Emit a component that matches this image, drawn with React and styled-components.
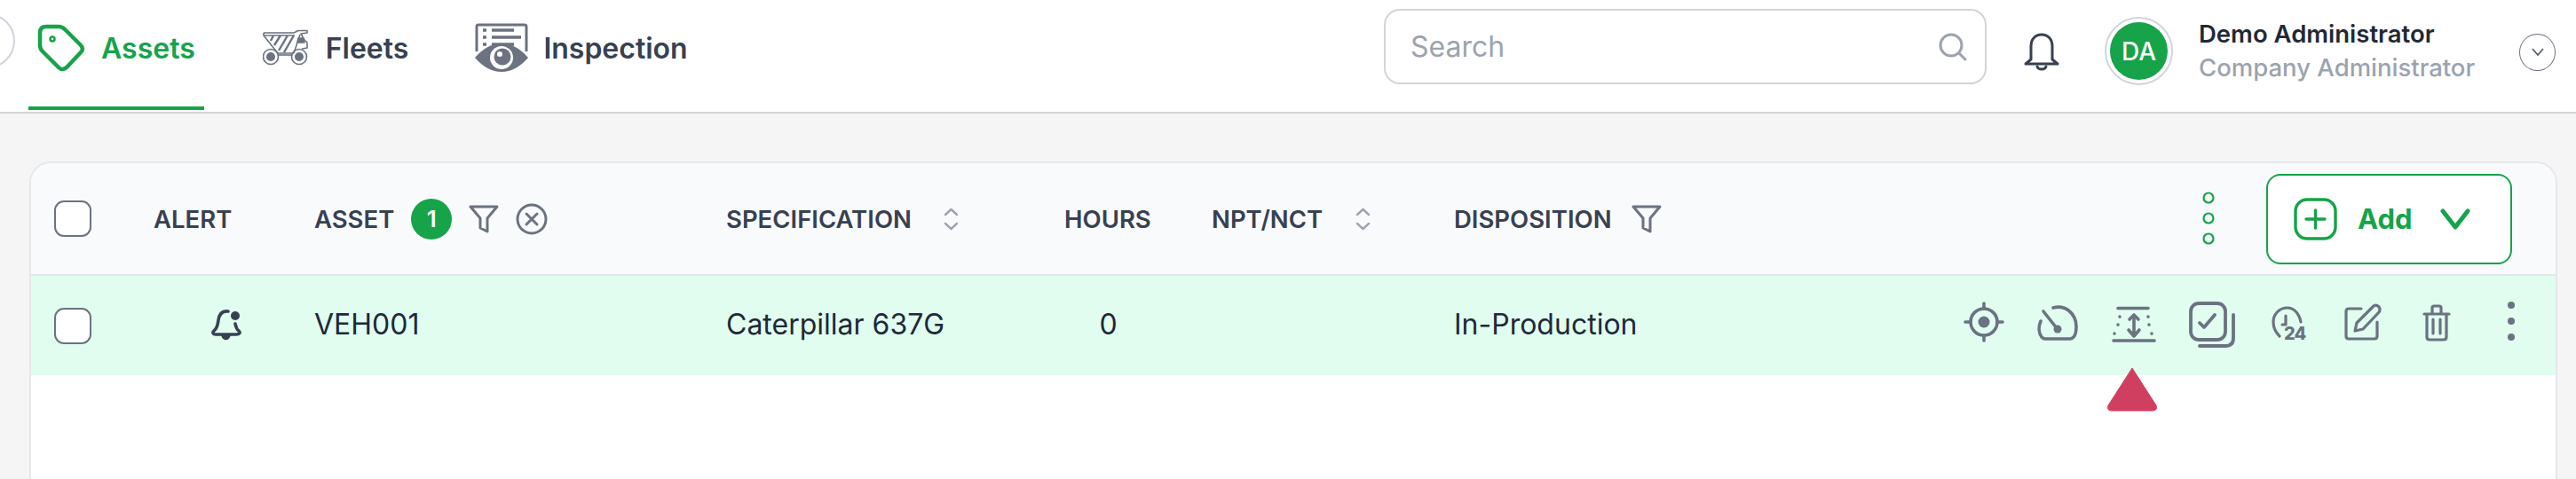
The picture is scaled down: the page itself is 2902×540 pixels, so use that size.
import React from 'react';
import styled, { createGlobalStyle } from 'styled-components';

const GREEN = '#16a34a';
const GRAY = '#6b7280';

const GlobalStyle = createGlobalStyle`
  html, body {
    margin: 0;
    height: 100%;
    background: #f5f5f5;
    font-family: Inter, "Liberation Sans", sans-serif;
    overflow: hidden;
  }
  * { box-sizing: border-box; }
`;

const Page = styled.div`
  height: 540px;
  display: flex;
  flex-direction: column;
`;

const TopBar = styled.header`
  height: 128px;
  flex: none;
  display: flex;
  background: #fff;
  border-bottom: 2px solid #d1d5db;
  padding-right: 23px;
`;

const CollapseButton = styled.button`
  width: 62px;
  height: 62px;
  margin: 15px 0 0 -45px;
  flex: none;
  border: 2px solid #d1d5db;
  border-radius: 50%;
  background: #fff;
  padding: 0;
`;

const Tabs = styled.nav`
  display: flex;
  margin-left: 15px;
`;

const Tab = styled.a`
  height: 124px;
  margin-left: ${p => p.$ml || 0}px;
  padding: 0 10px 12px;
  display: flex;
  align-items: center;
  gap: ${p => p.$gap}px;
  font-size: 32px;
  font-weight: 600;
  color: ${p => (p.$active ? GREEN : '#374151')};
  border-bottom: 4px solid ${p => (p.$active ? GREEN : 'transparent')};
`;

const RightSide = styled.div`
  margin-left: auto;
  display: flex;
  align-items: center;
  padding-bottom: 16px;
`;

const SearchBox = styled.div`
  width: 679px;
  height: 85px;
  margin: 0 42px 5px 0;
  padding: 0 20px 0 28px;
  display: flex;
  align-items: center;
  justify-content: space-between;
  border: 2px solid #d1d5db;
  border-radius: 18px;
  background: #fff;
  font-size: 32px;
  color: #9ca3af;
`;

const BellWrap = styled.div`
  display: flex;
  margin: 7px 51px 0 0;
`;

const Avatar = styled.div`
  width: 77px;
  height: 77px;
  margin: 5px 29px 0 0;
  flex: none;
  display: flex;
  align-items: center;
  justify-content: center;
  border-radius: 50%;
  border: 2px solid #d1d5db;
  background: #fff;
`;

const AvatarInner = styled.div`
  width: 65px;
  height: 65px;
  border-radius: 50%;
  background: ${GREEN};
  display: flex;
  align-items: center;
  justify-content: center;
  color: #fff;
  font-size: 28px;
  font-weight: 500;
`;

const UserInfo = styled.div`
  width: 311px;
  display: flex;
  flex-direction: column;
  gap: 4px;
  margin: 5px 50px 0 0;
`;

const UserName = styled.div`
  font-size: 27.5px;
  line-height: 32px;
  font-weight: 600;
  color: #1f2937;
  white-space: nowrap;
`;

const UserRole = styled.div`
  font-size: 27.5px;
  line-height: 36px;
  font-weight: 500;
  color: #9ca3af;
  white-space: nowrap;
`;

const ChevronCircle = styled.div`
  width: 41px;
  height: 42px;
  margin-top: 7px;
  display: flex;
  align-items: center;
  justify-content: center;
  border: 1px solid ${GRAY};
  border-radius: 50%;
`;

const Content = styled.main`
  flex: 1;
  padding: 54px 21px 0 33px;
  display: flex;
  min-height: 0;
`;

const Card = styled.section`
  flex: 1;
  background: #fff;
  border: 2px solid #e5e7eb;
  border-bottom: none;
  border-radius: 24px 24px 0 0;
  overflow: hidden;
`;

const columns = '112px 181px 464px 381px 166px 273px 1fr';

const HeadRow = styled.div`
  height: 127px;
  padding-left: 26px;
  display: grid;
  grid-template-columns: ${columns};
  align-items: center;
  background: #f9fafb;
  border-bottom: 2px solid #e5e7eb;
`;

const BodyRow = styled.div`
  height: 112px;
  padding-left: 26px;
  display: grid;
  grid-template-columns: ${columns};
  align-items: center;
  background: #e0fdf0;
  color: #1f2937;
  font-size: 32px;
`;

const Checkbox = styled.span`
  display: block;
  width: 42px;
  height: 41px;
  background: #fff;
  border: 2px solid ${GRAY};
  border-radius: 11px;
`;

const HeadCell = styled.div`
  display: flex;
  align-items: center;
  gap: ${p => p.$gap || 0}px;
  font-size: 27.5px;
  font-weight: 600;
  color: #374151;
  white-space: nowrap;
`;

const DispositionHead = styled(HeadCell)`
  margin-right: auto;
`;

const Badge = styled.span`
  width: 46px;
  height: 46px;
  border-radius: 50%;
  background: ${GREEN};
  color: #fff;
  display: flex;
  align-items: center;
  justify-content: center;
  font-size: 26px;
  font-weight: 600;
`;

const TextCell = styled.div`
  margin-bottom: 4px;
`;

const HoursCell = styled(TextCell)`
  width: 98px;
  padding-left: 1px;
  text-align: center;
`;

const AlertCell = styled.div`
  display: flex;
  padding-left: 65px;
`;

const HeadTools = styled.div`
  display: flex;
  align-items: center;
  justify-content: flex-end;
  gap: 58px;
  padding-right: 49px;
`;

const DispositionRow = styled.div`
  display: flex;
  align-items: center;
  justify-content: space-between;
`;

const AddButton = styled.button`
  width: 277px;
  height: 102px;
  padding: 0 0 0 29px;
  display: flex;
  align-items: center;
  background: #fff;
  border: 2px solid ${GREEN};
  border-radius: 16px;
  color: ${GREEN};
  font-family: inherit;
  font-size: 31px;
  font-weight: 700;
`;

const AddLabel = styled.span`
  margin: 0 31px 0 23px;
`;

const Actions = styled.div`
  position: relative;
  display: flex;
  justify-content: flex-end;
  padding-right: 8px;
  margin-bottom: 2px;
`;

const ActionSlot = styled.div`
  width: ${p => p.$w}px;
  padding-top: ${p => p.$top}px;
  display: flex;
  justify-content: center;
  align-items: flex-start;
`;

const Marker = styled.svg`
  position: absolute;
  left: 179px;
  top: 73px;
`;

const TagIcon = () => (
  <svg width="54" height="54" viewBox="0 0 54 54" fill="none" stroke={GREEN} strokeWidth="4.5" strokeLinejoin="round">
    <path d="M3 10Q3 3 10 3H24Q28 3 31 6L49 24Q53 28 49 32L33 49Q28 53 24 49L6 31Q3 28 3 24Z" />
    <circle cx="17" cy="17" r="2.5" strokeWidth="2.5" />
  </svg>
);

const TruckIcon = () => (
  <svg width="52" height="42" viewBox="0 0 52 42" fill="none" stroke={GRAY} strokeWidth="1.6" strokeLinejoin="round">
    <path d="M1 4H35L40 1.5H50V4L43 5L47 12L50 15V21L44 22M1 4V7L17 27H35M35 27L42 6" />
    <path d="M1 7H36" />
    <path d="M12 7L9 13M20 7L13 18M28 7L18 24M35 7L24 26" strokeWidth="2.4" />
    <path d="M40 10H45L47 15H39Z" fill={GRAY} />
    <path d="M17 29H33" />
    <circle cx="9" cy="31" r="8.5" />
    <circle cx="9" cy="31" r="5" fill={GRAY} stroke="none" />
    <circle cx="41" cy="31" r="8.5" />
    <circle cx="41" cy="31" r="5" fill={GRAY} stroke="none" />
  </svg>
);

const InspectionIcon = () => (
  <svg width="60" height="56" viewBox="0 0 60 56" fill="none">
    <path d="M2 32V4Q2 2 4 2H56Q58 2 58 4V32" stroke={GRAY} strokeWidth="3" />
    <path d="M9 8H13M19 8H44M9 16H13M19 16H52M9 24H13M19 24H44" stroke={GRAY} strokeWidth="3.4" />
    <path d="M0 39Q14 23 30 23Q46 23 60 39Q46 55 30 55Q14 55 0 39Z" fill={GRAY} />
    <circle cx="30" cy="39" r="13" fill="#fff" />
    <circle cx="31" cy="38" r="9.5" fill={GRAY} />
    <circle cx="28" cy="35" r="3" fill="#fff" />
  </svg>
);

const SearchIcon = () => (
  <svg width="32" height="32" viewBox="0 0 32 32" fill="none" stroke="#9ca3af" strokeWidth="3" strokeLinecap="round">
    <circle cx="14" cy="14" r="12" />
    <path d="M23 23L30 30" />
  </svg>
);

const BellIcon = () => (
  <svg width="40" height="44" viewBox="0 0 40 44" fill="none" stroke="#374151" strokeWidth="3" strokeLinecap="round" strokeLinejoin="round">
    <path d="M8 30V15C8 7 13 2 20 2C27 2 32 7 32 15V30L38 35H2L8 30Z" />
    <path d="M15 38C16 42 24 42 25 38" />
  </svg>
);

const SmallChevron = () => (
  <svg width="16" height="10" viewBox="0 0 16 10" fill="none" stroke="#4b5563" strokeWidth="1.6">
    <path d="M2 1L8 8L14 1" />
  </svg>
);

const SortIcon = () => (
  <svg width="19" height="26" viewBox="0 0 19 26" fill="none" stroke="#9ca3af" strokeWidth="2.4" strokeLinecap="round" strokeLinejoin="round">
    <path d="M3 8L9.5 2L16 8M3 18L9.5 24L16 18" />
  </svg>
);

const FunnelIcon = () => (
  <svg width="34" height="32" viewBox="0 0 34 32" fill="none" stroke={GRAY} strokeWidth="3" strokeLinejoin="round">
    <path d="M2 2H32L21 15V30L13 26V15Z" />
  </svg>
);

const ClearIcon = () => (
  <svg width="36" height="36" viewBox="0 0 36 36" fill="none" stroke={GRAY} strokeWidth="3" strokeLinecap="round">
    <circle cx="18" cy="18" r="16" />
    <path d="M12 12L24 24M24 12L12 24" />
  </svg>
);

const AlertBell = () => (
  <svg width="34" height="36" viewBox="0 0 34 36" fill="none" stroke="#374151" strokeWidth="3.6" strokeLinecap="round">
    <path d="M19 2C12 1 9 5 8 12C7 19 6 21 3 24C1 26 2 28 5 28H28C32 28 33 26 31 24C28 22 28 20 27 16" />
    <circle cx="27" cy="7" r="5" fill="#374151" stroke="none" />
    <path d="M11 29C13 36 20 36 22 29" fill="#374151" stroke="none" />
  </svg>
);

const VerticalDots = () => (
  <svg width="14" height="62" viewBox="0 0 14 62" fill="none" stroke={GREEN} strokeWidth="2.2">
    <circle cx="7" cy="7" r="5.5" />
    <circle cx="7" cy="30" r="5.5" />
    <circle cx="7" cy="53" r="5.5" />
  </svg>
);

const PlusBox = () => (
  <svg width="49" height="48" viewBox="0 0 49 48" fill="none" stroke={GREEN} strokeWidth="3.4" strokeLinecap="round">
    <rect x="2" y="2" width="45" height="44" rx="13" />
    <path d="M24.5 14V34M14 24H35" />
  </svg>
);

const AddChevron = () => (
  <svg width="34" height="26" viewBox="0 0 34 26" fill="none" stroke={GREEN} strokeWidth="5" strokeLinecap="round" strokeLinejoin="round">
    <path d="M3 4L17 22L31 4" />
  </svg>
);

const strokeProps = { fill: 'none', stroke: GRAY, strokeLinecap: 'round', strokeLinejoin: 'round' };

const TargetIcon = () => (
  <svg width="46" height="46" viewBox="0 0 46 46" {...strokeProps} strokeWidth="3.6">
    <circle cx="23" cy="23" r="15" />
    <circle cx="23" cy="23" r="6.5" fill={GRAY} stroke="none" />
    <path d="M23 2V8M23 38V44M2 23H8M38 23H44" />
  </svg>
);

const GaugeIcon = () => (
  <svg width="46" height="40" viewBox="0 0 46 40" {...strokeProps} strokeWidth="3.6">
    <path d="M18 3C32 -1 44 10 44 24C44 30 43 34 41 36C40 37 39 38 37 38H9C7 38 6 37 5 36C2 32 1 25 4 18" />
    <path d="M7 7L22 26" />
    <circle cx="23" cy="27" r="4.5" fill={GRAY} stroke="none" />
  </svg>
);

const HeightIcon = () => (
  <svg width="50" height="42" viewBox="0 0 50 42" {...strokeProps} strokeWidth="3.6">
    <path d="M7 2.5H41M2 39H48" />
    <path d="M25 11V33M20 15L25 10L30 15M19 27L25 34L31 27" />
    <path d="M9 12V12.1M41 12V12.1M7 21V21.1M42 21V21.1M3 31V31.1M45 31V31.1" strokeWidth="3.6" />
  </svg>
);

const CheckStackIcon = () => (
  <svg width="52" height="52" viewBox="0 0 52 52" {...strokeProps} strokeWidth="3.8">
    <rect x="2" y="2" width="39" height="41" rx="9" />
    <path d="M50 15V41Q50 50 41 50H12" />
    <path d="M12 24L17 29L29 15" />
  </svg>
);

const Clock24Icon = () => (
  <svg width="40" height="47" viewBox="0 0 40 47" {...strokeProps} strokeWidth="3.2">
    <path d="M33 18C31 8 25 2 18 2C8 2 2 10 2 18C2 24 4 29 9 34" />
    <path d="M16 11V21H12" />
    <text x="14" y="38" fontFamily="Inter, sans-serif" fontSize="20" fontWeight="800" fill={GRAY} stroke="none" letterSpacing="-1">24</text>
  </svg>
);

const EditIcon = () => (
  <svg width="42" height="42" viewBox="0 0 42 42" {...strokeProps} strokeWidth="3.2">
    <path d="M19 6H5Q2 6 2 9V37Q2 40 5 40H34Q37 40 37 37V21" />
    <path d="M12 31L14 22L33 3Q36 1 39 4Q41 7 39 10L21 29Z" />
  </svg>
);

const TrashIcon = () => (
  <svg width="32" height="42" viewBox="0 0 32 42" {...strokeProps} strokeWidth="3.2">
    <path d="M2 11H30M5 11V37Q5 40 8 40H24Q27 40 27 37V11M11 10V4Q11 2 13 2H19Q21 2 21 4V10M12 17V33M20 17V33" />
  </svg>
);

const KebabIcon = () => (
  <svg width="8" height="44" viewBox="0 0 8 44" fill={GRAY}>
    <circle cx="4" cy="4" r="4" />
    <circle cx="4" cy="22" r="4" />
    <circle cx="4" cy="40" r="4" />
  </svg>
);

const actionIcons = [
  [82, 0, TargetIcon],
  [84, 4, GaugeIcon],
  [88, 5, HeightIcon],
  [88, 0, CheckStackIcon],
  [85, 5, Clock24Icon],
  [82, 2, EditIcon],
  [84, 3, TrashIcon],
  [84, 0, KebabIcon],
];

function App() {
  return (
    <Page>
      <GlobalStyle />
      <TopBar>
        <CollapseButton aria-label="Collapse" />
        <Tabs>
          <Tab $active $gap={18}><TagIcon />Assets</Tab>
          <Tab $ml={56} $gap={19}><TruckIcon />Fleets</Tab>
          <Tab $ml={55} $gap={17}><InspectionIcon />Inspection</Tab>
        </Tabs>
        <RightSide>
          <SearchBox>Search<SearchIcon /></SearchBox>
          <BellWrap><BellIcon /></BellWrap>
          <Avatar><AvatarInner>DA</AvatarInner></Avatar>
          <UserInfo>
            <UserName>Demo Administrator</UserName>
            <UserRole>Company Administrator</UserRole>
          </UserInfo>
          <ChevronCircle><SmallChevron /></ChevronCircle>
        </RightSide>
      </TopBar>
      <Content>
        <Card>
          <HeadRow>
            <Checkbox />
            <HeadCell>ALERT</HeadCell>
            <HeadCell $gap={19}>ASSET<Badge>1</Badge><FunnelIcon /><ClearIcon /></HeadCell>
            <HeadCell $gap={35}>SPECIFICATION<SortIcon /></HeadCell>
            <HeadCell>HOURS</HeadCell>
            <HeadCell $gap={36}>NPT/NCT<SortIcon /></HeadCell>
            <HeadTools>
              <DispositionHead $gap={22}>DISPOSITION<FunnelIcon /></DispositionHead>
              <VerticalDots />
              <AddButton><PlusBox /><AddLabel>Add</AddLabel><AddChevron /></AddButton>
            </HeadTools>
          </HeadRow>
          <BodyRow>
            <Checkbox />
            <AlertCell><AlertBell /></AlertCell>
            <TextCell>VEH001</TextCell>
            <TextCell>Caterpillar 637G</TextCell>
            <HoursCell>0</HoursCell>
            <div />
            <DispositionRow>
              <TextCell>In-Production</TextCell>
              <Actions>
                <Marker width="58" height="52" viewBox="0 0 58 52">
                  <path d="M29 2L56 44Q58 50 52 50H6Q0 50 2 44Z" fill="#d13f60" stroke="#d13f60" strokeLinejoin="round" />
                </Marker>
                {actionIcons.map(([w, top, Icon], i) => (
                  <ActionSlot key={i} $w={w} $top={top}><Icon /></ActionSlot>
                ))}
              </Actions>
            </DispositionRow>
          </BodyRow>
        </Card>
      </Content>
    </Page>
  );
}

export default App;
